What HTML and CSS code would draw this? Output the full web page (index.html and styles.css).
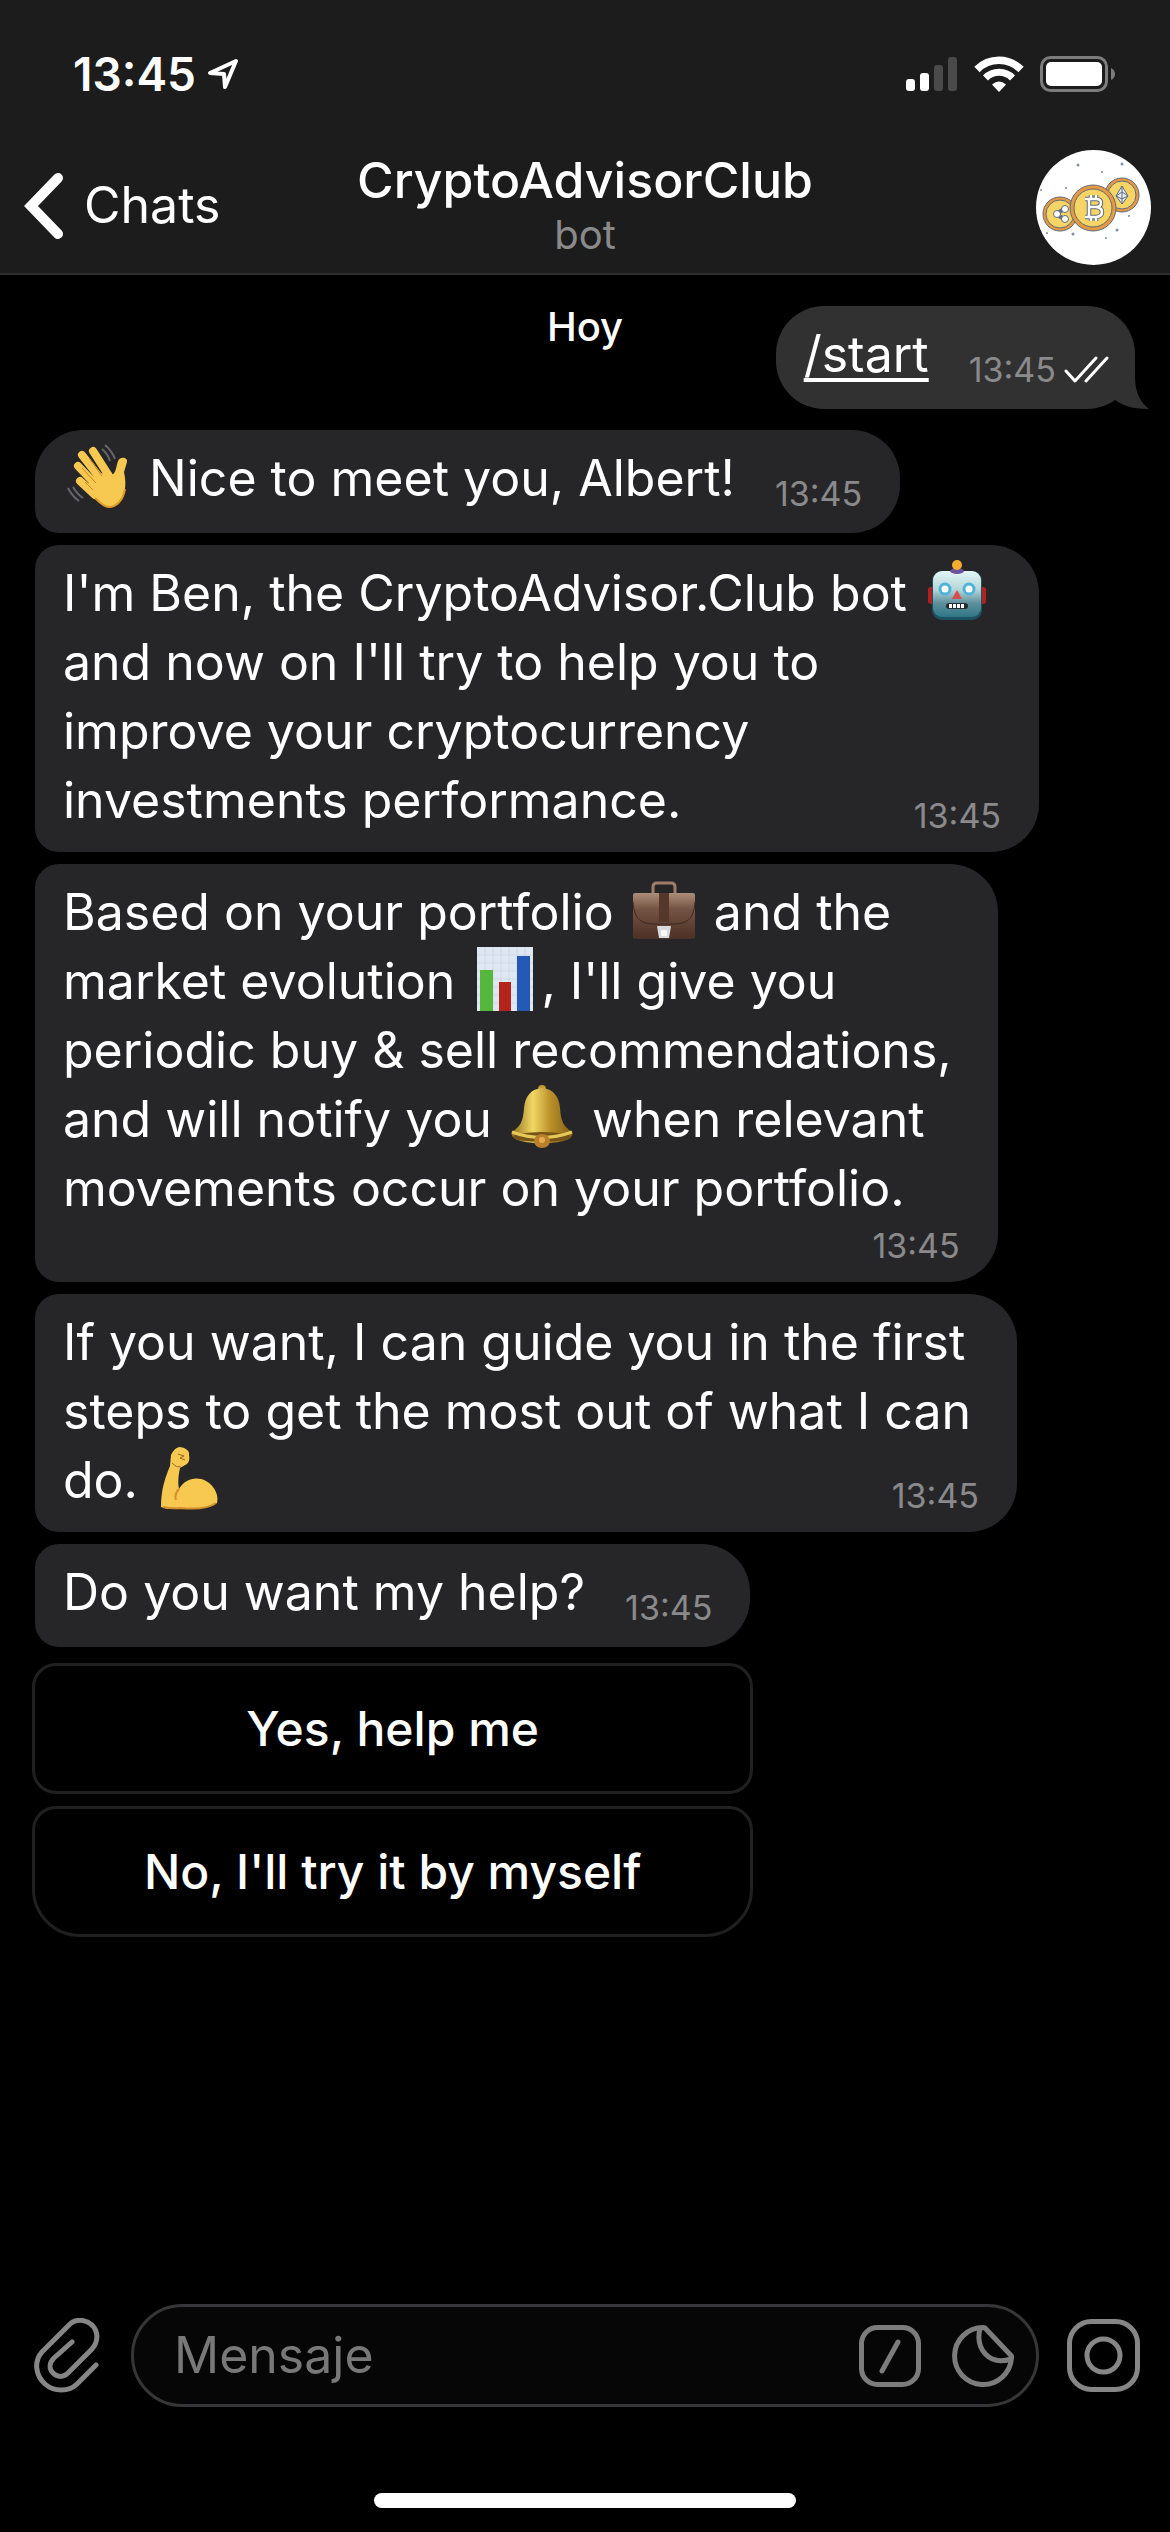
FILE: index.html
```html
<!DOCTYPE html>
<html lang="es">
<head>
  <meta charset="UTF-8">
  <meta name="viewport" content="width=device-width, initial-scale=1">
  <title>CryptoAdvisorClub</title>
  <link rel="stylesheet" href="styles.css">
</head>
<body>
  <header>
    <div class="status-bar">
      <div class="clock">
        <span>13:45</span>
        <svg width="32" height="32" viewBox="0 0 32 32" fill="none" stroke="#fff" stroke-width="4" stroke-linejoin="round"><path d="M29 3 3 15 17 16 18 29Z"/></svg>
      </div>
      <div class="indicators">
        <svg width="52" height="36" viewBox="0 0 52 36" fill="#fff">
          <rect x="0" y="23" width="9" height="12" rx="3"/>
          <rect x="14" y="17" width="9" height="18" rx="3"/>
          <rect x="28" y="9" width="9" height="26" rx="3" fill="#4a4a4a"/>
          <rect x="42" y="1" width="9" height="34" rx="3" fill="#4a4a4a"/>
        </svg>
        <svg width="50" height="36" viewBox="0 0 50 36" fill="none" stroke="#fff">
          <path d="M3 13.500A31 31 0 0 1 47 13.500" stroke-width="7.500"/>
          <path d="M11.500 22A19 19 0 0 1 38.500 22" stroke-width="7"/>
          <path d="M18 28.500Q25 22.500 32 28.500L25 36Z" fill="#fff" stroke="none"/>
        </svg>
        <svg width="76" height="36" viewBox="0 0 76 36">
          <rect x="1.500" y="1.500" width="65" height="33" rx="9" fill="none" stroke="#7c7c7c" stroke-width="3"/>
          <rect x="6" y="6" width="56" height="24" rx="5" fill="#fff"/>
          <path d="M71 12q4 2 4 6t-4 6z" fill="#7c7c7c"/>
        </svg>
      </div>
    </div>
    <div class="nav-bar">
      <a class="back" href="#">
        <svg width="45" height="68" viewBox="-5 0 45 68" fill="none" stroke="#fff" stroke-width="10" stroke-linecap="round" stroke-linejoin="miter"><path d="M34 6 7 34 34 62"/></svg>
        <span>Chats</span>
      </a>
      <div class="peer">
        <h1>CryptoAdvisorClub</h1>
        <p>bot</p>
      </div>
      <svg class="avatar" viewBox="0 0 115 115" role="img" aria-label="CryptoAdvisorClub">
        <circle cx="57.500" cy="57.500" r="57.500" fill="#fff"/>
        <g stroke="#5b6b80" stroke-width="1">
          <circle cx="86" cy="45" r="17" fill="#e8983f"/>
          <circle cx="86" cy="45" r="14" fill="#f6d565"/>
          <circle cx="24" cy="64" r="17" fill="#e8983f"/>
          <circle cx="24" cy="64" r="14" fill="#f6d565"/>
          <path d="M86 36 92 46 86 54 80 46ZM80 46 86 42 92 46 86 49ZM86 36V54" fill="#e9edf2"/>
          <path d="M20 64 28 59M20 64 28 69" stroke-width="4"/>
          <circle cx="21" cy="64" r="3.500" fill="#fff"/>
          <circle cx="29" cy="59" r="3.500" fill="#fff"/>
          <circle cx="29" cy="69" r="3.500" fill="#fff"/>
          <circle cx="57" cy="58" r="23" fill="#e8983f"/>
          <circle cx="57" cy="58" r="19" fill="#f6d565"/>
        </g>
        <g fill="none" stroke-linejoin="round">
          <path d="M49 49H60Q65 49 65 53T60 57H53M60 57Q66 57.500 66 62T60 67H49M53 49V67M55 45V49M60 45V49M55 67V71M60 67V71" stroke="#5b6b80" stroke-width="4.500"/>
          <path d="M49 49H60Q65 49 65 53T60 57H53M60 57Q66 57.500 66 62T60 67H49M53 49V67M55 45V49M60 45V49M55 67V71M60 67V71" stroke="#fff" stroke-width="2.500"/>
        </g>
        <g fill="#8291a3">
          <circle cx="42" cy="15" r="1.500"/><circle cx="86" cy="14" r="1.500"/>
          <circle cx="66" cy="22" r="1"/><circle cx="5" cy="40" r="1"/>
          <circle cx="30" cy="38" r="1"/><circle cx="93" cy="66" r="1"/>
          <circle cx="37" cy="84" r="1.500"/><circle cx="81" cy="80" r="1.500"/>
          <circle cx="70" cy="88" r="1"/><circle cx="11" cy="83" r="1"/>
        </g>
      </svg>
    </div>
  </header>

  <main>
    <div class="first-row">
      <p class="day">Hoy</p>
      <div class="msg out">
        <a href="#">/start</a>
        <span class="time">13:45
          <svg width="46" height="28" viewBox="0 0 46 28" fill="none" stroke="#fff" stroke-width="3" stroke-linecap="round" stroke-linejoin="round"><path d="M2 15 11 25 32 2M22 25 43 2"/></svg>
        </span>
        <svg class="tail" width="38" height="46" viewBox="0 0 38 46"><path d="M24 0V14C24 30 30 40 38 46C20 46 10 42 3 36Z" fill="#313131"/></svg>
      </div>
    </div>

    <div class="msg first">
      <svg class="emoji" viewBox="0 0 64 64" role="img" aria-label="👋">
        <g fill="none" stroke="#f8c951" stroke-width="8" stroke-linecap="round">
          <path d="M26 7 42 32M15 11 36 38M11 22 31 43M13 37 28 51"/>
        </g>
        <path d="M20 41 33 29 45 31C49 29 49 23 51 17C53 12 61 13 60 18L57 28C60 42 58 52 51 59C46 64 40 64 34 59L18 44Z" fill="#f8c951"/>
        <path d="M58 45C56 57 49 63 42 63C37 63 32 58 28 54" fill="none" stroke="#df9a28" stroke-width="2"/>
        <path d="M22 14 35 32M15 24 29 39M18 38 26 46" fill="none" stroke="#c88722" stroke-width="1"/>
        <path d="M35 5Q41 10 43 17M38 1Q45 7 48 15M6 43Q10 50 16 54M1 44Q5 52 12 57" fill="none" stroke="#66666a" stroke-width="2"/>
      </svg>
      Nice to meet you, Albert!
      <span class="time">13:45</span>
    </div>

    <div class="msg">
      I'm Ben, the CryptoAdvisor.Club bot
      <svg class="emoji" viewBox="0 0 64 64" role="img" aria-label="🤖">
        <defs>
          <linearGradient id="robot" x2="0" y2="1"><stop offset="0" stop-color="#e4f7f6"/><stop offset=".4" stop-color="#b5d6da"/><stop offset=".7" stop-color="#5d909d"/><stop offset="1" stop-color="#2f7686"/></linearGradient>
        </defs>
        <rect x="3" y="28" width="58" height="17" rx="3" fill="#b3211f"/>
        <rect x="7" y="12" width="50" height="49" rx="10" fill="#1d5262"/>
        <rect x="8" y="12" width="48" height="46" rx="9" fill="url(#robot)"/>
        <ellipse cx="32" cy="12" rx="7" ry="3" fill="#6a559c"/>
        <circle cx="32" cy="6" r="5" fill="#f5ad2e"/>
        <circle cx="20" cy="30" r="5" fill="#fff" stroke="#4fb2d8" stroke-width="3"/>
        <circle cx="44" cy="30" r="5" fill="#fff" stroke="#4fb2d8" stroke-width="3"/>
        <path d="M32 31 37 40H27Z" fill="#d84d45"/>
        <rect x="21" y="44" width="22" height="6" rx="3" fill="#252c30"/>
        <path d="M24 47H40" stroke="#fff" stroke-width="4" stroke-dasharray="3 1"/>
      </svg><br>
      and now on I'll try to help you to<br>
      improve your cryptocurrency<br>
      investments performance.
      <span class="time">13:45</span>
    </div>

    <div class="msg">
      Based on your portfolio
      <svg class="emoji" viewBox="0 0 64 64" role="img" aria-label="💼">
        <defs>
          <linearGradient id="leather" x2="0" y2="1"><stop offset="0" stop-color="#ad8e7a"/><stop offset=".35" stop-color="#735343"/><stop offset="1" stop-color="#4d3025"/></linearGradient>
        </defs>
        <path d="M21 16V9Q21 5 25 5H39Q43 5 43 9V16" fill="none" stroke="#a17c69" stroke-width="3"/>
        <rect x="1" y="15" width="62" height="46" rx="2" fill="url(#leather)"/>
        <path d="M1 24C2 40 8 45 20 46H44C56 45 62 40 63 24" fill="none" stroke="#3f271e" stroke-width="1"/>
        <path d="M27 15H37V44H27Z" fill="#56382b"/>
        <path d="M25 48H39L37 60H27Z" fill="#d9dadd"/>
        <rect x="29" y="52" width="6" height="6" rx="1" fill="#f7f7f7"/>
      </svg>
      and the<br>
      market evolution
      <svg class="emoji" viewBox="0 0 64 64" role="img" aria-label="📊">
        <rect x="4" y="0" width="56" height="64" fill="#dfe8f2"/>
        <path d="M4 8H60M4 16H60M4 24H60M4 32H60M4 40H60M4 48H60M4 56H60M12 0V64M20 0V64M28 0V64M36 0V64M44 0V64M52 0V64" stroke="#cdd9e6" stroke-width="1"/>
        <path d="M7 23H20V64H7Z" fill="#55b83d"/>
        <path d="M26 35H38V64H26Z" fill="#b3241c"/>
        <path d="M44 9H57V64H44Z" fill="#2459b5"/>
      </svg>, I'll give you<br>
      periodic buy &amp; sell recommendations,<br>
      and will notify you
      <svg class="emoji" viewBox="0 0 64 64" role="img" aria-label="🔔">
        <defs>
          <linearGradient id="brass"><stop offset="0" stop-color="#92701b"/><stop offset=".35" stop-color="#f1d764"/><stop offset=".65" stop-color="#b78e27"/><stop offset="1" stop-color="#806019"/></linearGradient>
        </defs>
        <circle cx="32" cy="4" r="4" fill="#c49a33"/>
        <path d="M32 3C43 4 49 11 50 23C51 36 53 41 62 47C65 54 52 58 32 58S-1 54 2 47C11 41 13 36 14 23C15 11 21 4 32 3Z" fill="url(#brass)"/>
        <ellipse cx="32" cy="52" rx="29" ry="5" fill="#765419"/>
        <path d="M2 47Q32 58 62 47" fill="none" stroke="#e6c856" stroke-width="3"/>
        <ellipse cx="32" cy="56" rx="8" ry="7" fill="#b8802b"/>
        <circle cx="32" cy="55" r="3" fill="#e7ad4c"/>
      </svg>
      when relevant<br>
      movements occur on your portfolio.
      <span class="time below">13:45</span>
    </div>

    <div class="msg">
      If you want, I can guide you in the first<br>
      steps to get the most out of what I can<br>
      do.
      <svg class="emoji" viewBox="0 0 64 64" role="img" aria-label="💪">
        <path d="M5 61C5 42 10 30 14 20L15 9C17 5 20 1 24 1C30 2 34 5 33 9C34 13 33 16 31 18L24 22C22 31 22 37 23 43C29 33 40 30 50 35C59 40 63 50 61 57C51 64 35 63 24 62C16 64 10 63 5 61Z" fill="#f8c951"/>
        <path d="M23 43Q18 48 20 54M7 61Q16 63 24 62C35 63 51 64 60 57" fill="none" stroke="#d58f29" stroke-width="2"/>
        <path d="M22 8 28 10 24 12 29 14M16 17Q20 22 25 21" fill="none" stroke="#9a6820" stroke-width="1"/>
      </svg>
      <span class="time">13:45</span>
    </div>

    <div class="question">
      <div class="msg">
        Do you want my help?
        <span class="time">13:45</span>
      </div>
      <div class="keyboard">
        <button type="button">Yes, help me</button>
        <button type="button">No, I'll try it by myself</button>
      </div>
    </div>
  </main>

  <footer>
    <form class="composer">
      <button type="button" aria-label="Adjuntar">
        <svg width="69" height="76" viewBox="0 0 69 76" fill="none" stroke="#868686" stroke-width="5" stroke-linecap="round"><path d="M62 47 43 66C35 74 20 74 11 66C1 57 0 43 8 34L34 8C41 0 51 1 58 7C64 13 65 23 58 31L34 55C29 60 23 59 19 55C15 51 15 45 20 40L38 24"/></svg>
      </button>
      <div class="field">
        <input type="text" placeholder="Mensaje" aria-label="Mensaje">
        <button type="button" aria-label="Comandos">
          <svg width="62" height="62" viewBox="0 0 62 62" fill="none" stroke="#7c7c7c" stroke-width="5" stroke-linecap="round"><rect x="2.500" y="2.500" width="57" height="57" rx="16"/><path d="M23 46 39 17"/></svg>
        </button>
        <button type="button" aria-label="Stickers">
          <svg width="62" height="62" viewBox="0 0 62 62" fill="none" stroke="#7c7c7c" stroke-width="5" stroke-linejoin="round"><path d="M31 2.500A28.500 28.500 0 1 0 59.500 33V31L33 3ZM28 3C23 24 37 41 59 34"/></svg>
        </button>
      </div>
      <button type="button" aria-label="Cámara">
        <svg width="73" height="73" viewBox="0 0 73 73" fill="none" stroke="#868686" stroke-width="5"><rect x="2.500" y="2.500" width="68" height="68" rx="22"/><circle cx="36.500" cy="36.500" r="16.500"/></svg>
      </button>
    </form>
    <div class="home-bar"></div>
  </footer>
</body>
</html>
```
FILE: styles.css
```css
* {
  box-sizing: border-box;
}
body {
  margin: 0;
  min-height: 100vh;
  display: flex;
  flex-direction: column;
  background: #000;
  color: #fff;
  font-family: Inter, "Liberation Sans", sans-serif;
  font-size: 50px;
  line-height: 69px;
}
svg {
  display: block;
  flex: none;
}
h1, p {
  margin: 0;
}
a {
  color: #fff;
}
button {
  padding: 0;
  background: none;
  border: none;
  color: #fff;
  font: inherit;
  cursor: pointer;
}

/* header */
header {
  background: #1c1c1c;
  border-bottom: 2px solid #303030;
}
.status-bar {
  display: flex;
  justify-content: space-between;
  align-items: center;
  height: 148px;
  padding: 0 54px 0 73px;
}
.clock {
  display: flex;
  align-items: center;
  gap: 11px;
  font-size: 46px;
  font-weight: 600;
}
.indicators {
  display: flex;
  gap: 16px;
}
.nav-bar {
  display: grid;
  grid-template-columns: 1fr auto 1fr;
  align-items: center;
  height: 125px;
  padding: 0 19px 6px;
}
.back {
  display: flex;
  align-items: center;
  gap: 20px;
  padding-bottom: 4px;
  text-decoration: none;
}
.peer {
  padding-bottom: 6px;
  text-align: center;
}
.peer h1 {
  font-size: 50px;
  font-weight: 500;
  line-height: 60px;
}
.peer p {
  color: #8a8a8a;
  font-size: 40px;
  line-height: 50px;
}
.avatar {
  width: 115px;
  height: 115px;
  justify-self: end;
}

/* conversation */
main {
  flex: 1;
  display: flex;
  flex-direction: column;
  align-items: flex-start;
  gap: 12px;
  padding: 31px 35px 40px;
}
.first-row {
  align-self: stretch;
  display: grid;
  grid-template-columns: 1fr auto 1fr;
  margin-bottom: 9px;
}
.day {
  grid-column: 2;
  font-size: 40px;
  font-weight: 500;
  line-height: 42px;
}
.msg {
  min-height: 103px;
  padding: 14px 46px 16px 28px;
  border-radius: 24px 48px 48px 24px;
  background: #262628;
}
.msg.first {
  border-top-left-radius: 48px;
}
.msg.out {
  position: relative;
  justify-self: end;
  padding-right: 33px;
  border-radius: 48px;
  background: #313131;
}
.out a {
  text-decoration-thickness: 4px;
  text-underline-offset: 6px;
}
.tail {
  position: absolute;
  right: -14px;
  bottom: 0;
}
.time {
  float: right;
  display: flex;
  align-items: center;
  gap: 8px;
  margin: 30px -8px 0 40px;
  color: #8a8a8c;
  font-size: 34px;
  line-height: 40px;
}
.time.below {
  float: none;
  justify-content: flex-end;
  margin: 3px -8px 0 0;
}
.emoji {
  display: inline-block;
  width: 64px;
  height: 64px;
  margin: 0 4px;
  vertical-align: -12px;
}
.keyboard {
  display: flex;
  flex-direction: column;
  gap: 12px;
  margin: 16px -3px 0;
}
.keyboard button {
  height: 131px;
  border: 3px solid #202020;
  border-radius: 24px;
  font-size: 48px;
  font-weight: 500;
}
.keyboard button:last-child {
  border-radius: 24px 24px 48px 48px;
}

/* message box */
.composer {
  display: flex;
  align-items: center;
  gap: 28px;
  padding: 0 30px 0 34px;
}
.field {
  flex: 1;
  display: flex;
  align-items: center;
  gap: 31px;
  min-width: 0;
  height: 103px;
  padding: 0 22px 0 40px;
  border: 3px solid #363638;
  border-radius: 52px;
  background: #060606;
}
.field input {
  flex: 1;
  min-width: 0;
  padding: 0;
  border: none;
  outline: none;
  background: none;
  color: #fff;
  font: inherit;
}
.field input::placeholder {
  color: #787878;
}
.home-bar {
  width: 36%;
  height: 15px;
  margin: 86px auto 24px;
  border-radius: 8px;
  background: #fff;
}
```
